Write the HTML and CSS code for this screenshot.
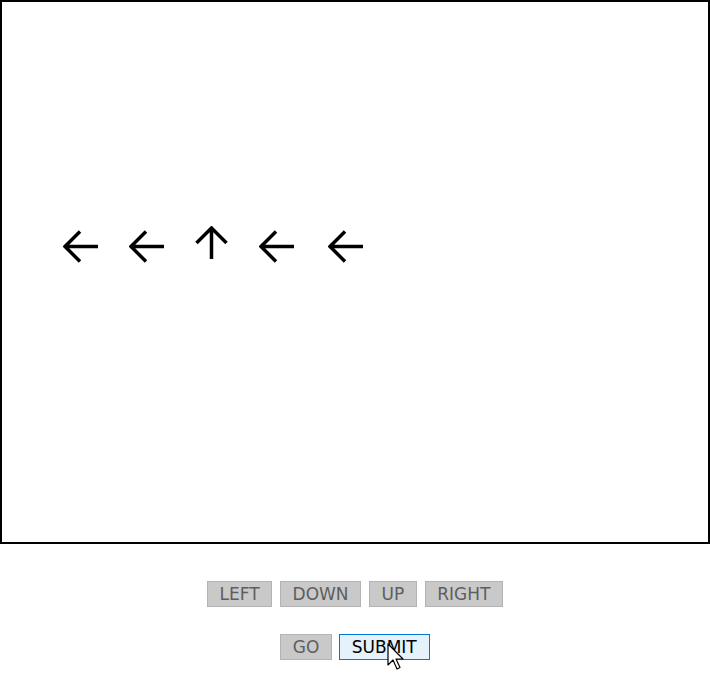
FILE: index.html
```html
<!DOCTYPE html>
<html>
<head>
<meta charset="utf-8">
<link rel="stylesheet" href="styles.css">
</head>
<body>
<div class="stage">
  <div class="arrows">
    <svg class="arrow" width="36" height="40" viewBox="0 0 36 40"><path d="M2 22.5 H35 M17 7.5 L2 22.5 L17 37.5" /></svg>
    <svg class="arrow" width="36" height="40" viewBox="0 0 36 40"><path d="M2 22.5 H35 M17 7.5 L2 22.5 L17 37.5" /></svg>
    <svg class="arrow up" width="36" height="40" viewBox="0 0 36 40"><path d="M16.5 2 V33 M1.5 17 L16.5 2 L31.5 17" /></svg>
    <svg class="arrow" width="36" height="40" viewBox="0 0 36 40"><path d="M2 22.5 H35 M17 7.5 L2 22.5 L17 37.5" /></svg>
    <svg class="arrow last" width="36" height="40" viewBox="0 0 36 40"><path d="M2 22.5 H35 M17 7.5 L2 22.5 L17 37.5" /></svg>
  </div>
</div>
<div class="controls">
  <div class="row">
    <button class="btn" disabled>LEFT</button>
    <button class="btn" disabled>DOWN</button>
    <button class="btn" disabled>UP</button>
    <button class="btn" disabled>RIGHT</button>
  </div>
  <div class="row row2">
    <button class="btn" disabled>GO</button>
    <button class="btn active">SUBMIT</button>
  </div>
</div>
<svg class="cursor" width="20" height="28" viewBox="0 0 20 28"><path d="M1 1 V22 L6 17 L10 26 L13 24.5 L9 16 L16 16 Z" /></svg>
</body>
</html>
```
FILE: styles.css
```css
html, body {
  margin: 0;
  padding: 0;
  background: #fff;
  font-family: "DejaVu Sans", Verdana, sans-serif;
}
.stage {
  box-sizing: border-box;
  width: 710px;
  height: 544px;
  border: 2px solid #000;
}
.arrows {
  display: flex;
  align-items: flex-start;
  padding-top: 222px;
  padding-left: 61px;
}
.arrow {
  display: block;
  fill: none;
  stroke: #000;
  stroke-width: 3.5;
  margin-right: 30px;
}
.arrow.up {
  margin-top: 2px;
  margin-right: 28px;
}
.arrow.last {
  margin-left: 3px;
}
.controls {
  display: flex;
  flex-direction: column;
  align-items: center;
  padding-top: 37px;
  gap: 27px;
}
.row {
  display: flex;
  gap: 8px;
  justify-content: center;
}
.row2 {
  gap: 7px;
}
.btn {
  box-sizing: border-box;
  height: 26px;
  margin: 0;
  padding: 0 11.5px;
  font-family: "DejaVu Sans", Verdana, sans-serif;
  font-size: 17px;
  line-height: 24px;
  color: #5e5e5e;
  background: #c9c9c9;
  border: 1px solid #b3b3b3;
  border-radius: 0;
}
.btn.active {
  color: #000;
  background: #e5f1fb;
  border-color: #0078d7;
  padding: 0 12px;
}
.cursor {
  position: absolute;
  left: 387px;
  top: 643px;
  fill: #fff;
  stroke: #000;
  stroke-width: 1.2;
  stroke-linejoin: round;
}
```
